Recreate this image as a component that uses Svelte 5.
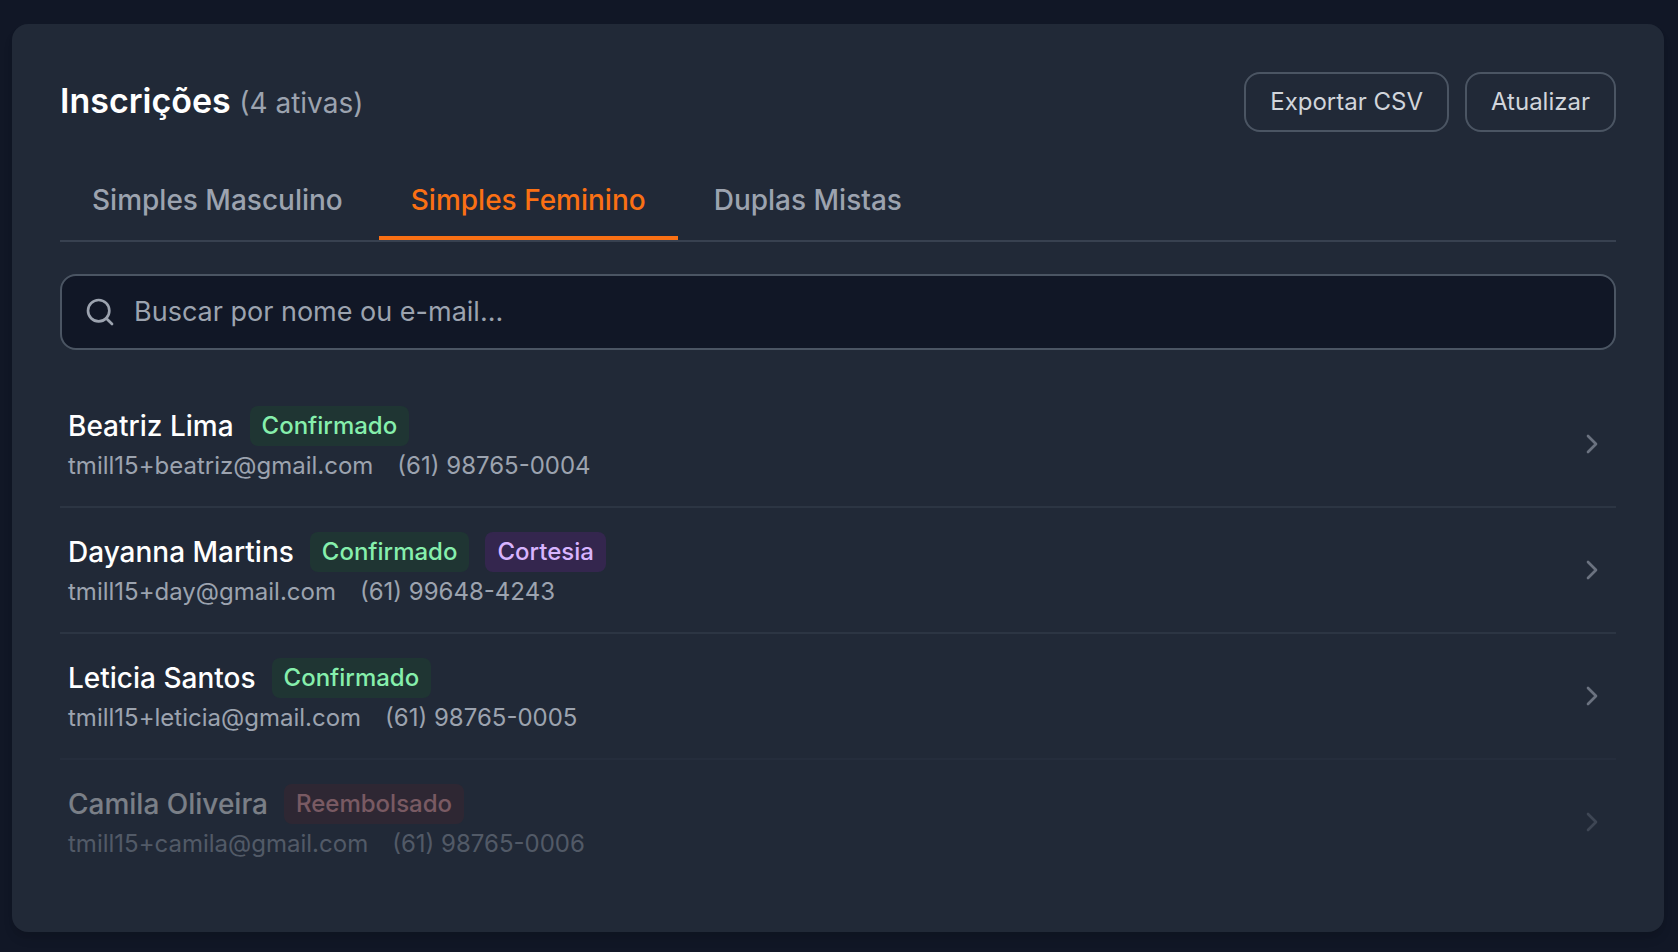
<script>
  const tabs = ['Simples Masculino', 'Simples Feminino', 'Duplas Mistas'];
  let active = $state(1);
  let query = $state('');

  const people = [
    { name: 'Beatriz Lima', email: 'tmill15+beatriz@gmail.com', phone: '(61) 98765-0004', badges: [['Confirmado', 'green']] },
    { name: 'Dayanna Martins', email: 'tmill15+day@gmail.com', phone: '(61) 99648-4243', badges: [['Confirmado', 'green'], ['Cortesia', 'purple']] },
    { name: 'Leticia Santos', email: 'tmill15+leticia@gmail.com', phone: '(61) 98765-0005', badges: [['Confirmado', 'green']] },
    { name: 'Camila Oliveira', email: 'tmill15+camila@gmail.com', phone: '(61) 98765-0006', badges: [['Reembolsado', 'red']], inactive: true }
  ];

  const shown = $derived(
    people.filter((p) => (p.name + ' ' + p.email).toLowerCase().includes(query.toLowerCase()))
  );
</script>

<main class="page">
  <section class="card">
    <header class="head">
      <h1>Inscrições <span class="count">(4 ativas)</span></h1>
      <div class="actions">
        <button class="btn" type="button">Exportar CSV</button>
        <button class="btn" type="button">Atualizar</button>
      </div>
    </header>

    <div class="tabs" role="tablist">
      {#each tabs as tab, i}
        <button class="tab" class:active={active === i} type="button" role="tab" aria-selected={active === i} onclick={() => (active = i)}>{tab}</button>
      {/each}
    </div>

    <label class="search">
      <svg class="icon" viewBox="0 0 24 24" aria-hidden="true">
        <circle cx="11" cy="11" r="8" />
        <path d="m21 21-4.35-4.35" />
      </svg>
      <input type="text" aria-label="Buscar" placeholder="Buscar por nome ou e-mail..." bind:value={query} />
    </label>

    <ul class="list">
      {#each shown as p}
        <li class:inactive={p.inactive}>
          <button class="row" type="button">
            <span class="info">
              <span class="line">
                <span class="name">{p.name}</span>
                {#each p.badges as [text, tone]}
                  <span class="badge {tone}">{text}</span>
                {/each}
              </span>
              <span class="contact">
                <span>{p.email}</span>
                <span>{p.phone}</span>
              </span>
            </span>
            <svg class="icon chevron" viewBox="0 0 24 24" aria-hidden="true">
              <path d="m9 18 6-6-6-6" />
            </svg>
          </button>
        </li>
      {/each}
    </ul>
  </section>
</main>

<style>
  :global(body) {
    margin: 0;
    background: #111726;
  }
  .page {
    box-sizing: border-box;
    min-height: 100vh;
    padding: 24px 14px 20px 12px;
    font-family: Inter, 'Liberation Sans', sans-serif;
    color: #fff;
  }
  .card {
    padding: 48px;
    border-radius: 16px;
    background: #212937;
    box-shadow: 0 8px 12px -2px rgba(0, 0, 0, 0.1), 0 4px 8px -4px rgba(0, 0, 0, 0.1);
  }
  button,
  input {
    font: inherit;
    color: inherit;
    background: none;
    border: 0;
    margin: 0;
    padding: 0;
  }
  button {
    cursor: pointer;
  }
  .head {
    display: flex;
    align-items: center;
    justify-content: space-between;
    margin-bottom: 32px;
  }
  h1 {
    margin: 0;
    font-size: 34px;
    line-height: 56px;
    font-weight: 600;
  }
  .count {
    font-size: 28px;
    font-weight: 400;
    color: #9ca3af;
  }
  .actions {
    display: flex;
    gap: 16px;
  }
  .btn {
    padding: 12px 24px;
    border: 2px solid #4b5563;
    border-radius: 16px;
    font-size: 24px;
    line-height: 32px;
    color: #d1d5db;
  }
  .tabs {
    display: flex;
    gap: 4px;
    margin-bottom: 32px;
    border-bottom: 2px solid #384150;
  }
  .tab {
    padding: 16px 32px;
    border-bottom: 4px solid transparent;
    font-size: 28px;
    line-height: 40px;
    font-weight: 500;
    color: #9ca3af;
  }
  .tab.active {
    border-color: #fa7014;
    color: #fa7014;
  }
  .search {
    display: flex;
    align-items: center;
    gap: 18px;
    padding: 16px 22px;
    margin-bottom: 32px;
    border: 2px solid #4b5563;
    border-radius: 16px;
    background: #111726;
    color: #9ca3af;
  }
  .search input {
    flex: 1;
    min-width: 0;
    height: 40px;
    font-size: 27px;
    line-height: 40px;
    outline: none;
  }
  .search input::placeholder {
    color: #9ca3af;
    opacity: 1;
  }
  .icon {
    flex: none;
    width: 32px;
    height: 32px;
    fill: none;
    stroke: currentColor;
    stroke-width: 2;
    stroke-linecap: round;
    stroke-linejoin: round;
  }
  .chevron {
    color: #6b7280;
  }
  .list {
    margin: 0;
    padding: 0;
    list-style: none;
  }
  li + li {
    border-top: 2px solid #2c3543;
  }
  .inactive {
    opacity: 0.4;
  }
  .row {
    display: flex;
    align-items: center;
    justify-content: space-between;
    width: 100%;
    padding: 24px 8px;
    text-align: left;
  }
  .info {
    display: flex;
    flex-direction: column;
    gap: 4px;
  }
  .line {
    display: flex;
    align-items: center;
    gap: 16px;
  }
  .name {
    font-size: 28px;
    line-height: 40px;
    font-weight: 500;
  }
  .badge {
    padding: 4px 12px;
    border-radius: 8px;
    font-size: 24px;
    line-height: 32px;
    font-weight: 500;
  }
  .green {
    background: #1f3533;
    color: #86efac;
  }
  .purple {
    background: #34264e;
    color: #d8b4fe;
  }
  .red {
    background: #43262e;
    color: #fca5a5;
  }
  .contact {
    display: flex;
    gap: 24px;
    font-size: 24px;
    line-height: 32px;
    color: #9ca3af;
  }
</style>
